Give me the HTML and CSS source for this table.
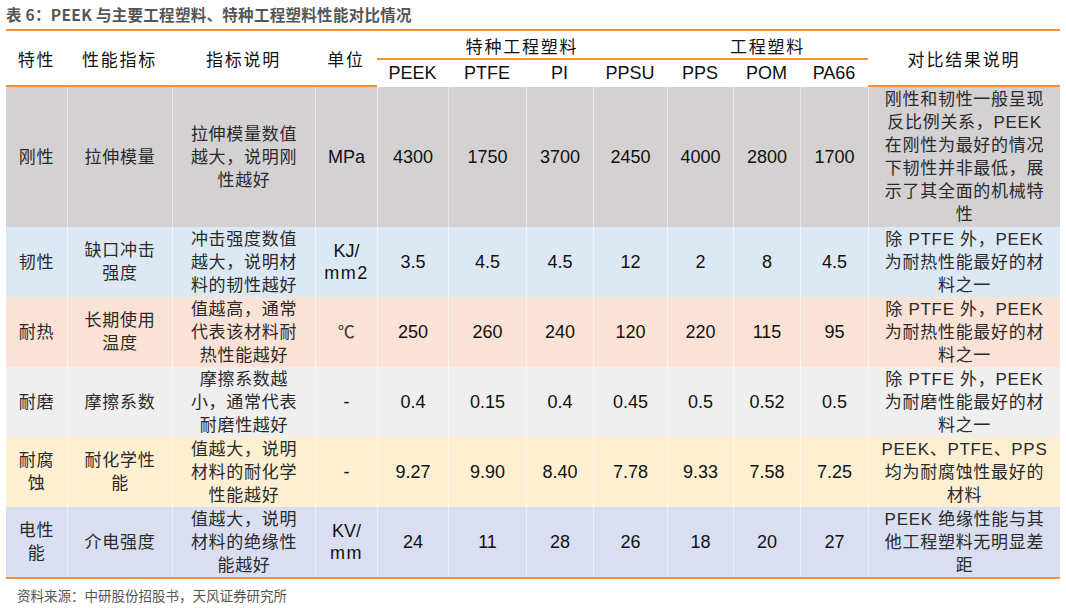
FILE: index.html
```html
<!DOCTYPE html>
<html lang="zh-CN">
<head>
<meta charset="utf-8">
<title>表 6</title>
<link rel="stylesheet" href="styles.css">
</head>
<body>
<div class="page">
  <div class="title">表 6：PEEK 与主要工程塑料、特种工程塑料性能对比情况</div>
  <div class="grid">
    <div class="h h-span c1">特性</div>
    <div class="h h-span c2">性能指标</div>
    <div class="h h-span c3">指标说明</div>
    <div class="h h-span c4">单位</div>
    <div class="h h-group g1">特种工程塑料</div>
    <div class="h h-group g2">工程塑料</div>
    <div class="h h-span c12">对比结果说明</div>
    <div class="h h-sub">PEEK</div>
    <div class="h h-sub">PTFE</div>
    <div class="h h-sub">PI</div>
    <div class="h h-sub">PPSU</div>
    <div class="h h-sub">PPS</div>
    <div class="h h-sub">POM</div>
    <div class="h h-sub">PA66</div>

    <div class="row r1">
      <div class="d first">刚性</div>
      <div class="d">拉伸模量</div>
      <div class="d">拉伸模量数值<br>越大，说明刚<br>性越好</div>
      <div class="d n">MPa</div>
      <div class="d n">4300</div>
      <div class="d n">1750</div>
      <div class="d n">3700</div>
      <div class="d n">2450</div>
      <div class="d n">4000</div>
      <div class="d n">2800</div>
      <div class="d n">1700</div>
      <div class="d">刚性和韧性一般呈现<br>反比例关系，PEEK<br>在刚性为最好的情况<br>下韧性并非最低，展<br>示了其全面的机械特<br>性</div>
    </div>

    <div class="row r2">
      <div class="d first">韧性</div>
      <div class="d">缺口冲击<br>强度</div>
      <div class="d">冲击强度数值<br>越大，说明材<br>料的韧性越好</div>
      <div class="d n"><span class="unit">KJ/<br><span class="mm">mm2</span></span></div>
      <div class="d n">3.5</div>
      <div class="d n">4.5</div>
      <div class="d n">4.5</div>
      <div class="d n">12</div>
      <div class="d n">2</div>
      <div class="d n">8</div>
      <div class="d n">4.5</div>
      <div class="d">除 PTFE 外，PEEK<br>为耐热性能最好的材<br>料之一</div>
    </div>

    <div class="row r3">
      <div class="d first">耐热</div>
      <div class="d">长期使用<br>温度</div>
      <div class="d">值越高，通常<br>代表该材料耐<br>热性能越好</div>
      <div class="d deg">℃</div>
      <div class="d n">250</div>
      <div class="d n">260</div>
      <div class="d n">240</div>
      <div class="d n">120</div>
      <div class="d n">220</div>
      <div class="d n">115</div>
      <div class="d n">95</div>
      <div class="d">除 PTFE 外，PEEK<br>为耐热性能最好的材<br>料之一</div>
    </div>

    <div class="row r4">
      <div class="d first">耐磨</div>
      <div class="d">摩擦系数</div>
      <div class="d">摩擦系数越<br>小，通常代表<br>耐磨性越好</div>
      <div class="d n">-</div>
      <div class="d n">0.4</div>
      <div class="d n">0.15</div>
      <div class="d n">0.4</div>
      <div class="d n">0.45</div>
      <div class="d n">0.5</div>
      <div class="d n">0.52</div>
      <div class="d n">0.5</div>
      <div class="d">除 PTFE 外，PEEK<br>为耐磨性能最好的材<br>料之一</div>
    </div>

    <div class="row r5">
      <div class="d first">耐腐<br>蚀</div>
      <div class="d">耐化学性<br>能</div>
      <div class="d">值越大，说明<br>材料的耐化学<br>性能越好</div>
      <div class="d n">-</div>
      <div class="d n">9.27</div>
      <div class="d n">9.90</div>
      <div class="d n">8.40</div>
      <div class="d n">7.78</div>
      <div class="d n">9.33</div>
      <div class="d n">7.58</div>
      <div class="d n">7.25</div>
      <div class="d">PEEK、PTFE、PPS<br>均为耐腐蚀性最好的<br>材料</div>
    </div>

    <div class="row r6">
      <div class="d first">电性<br>能</div>
      <div class="d">介电强度</div>
      <div class="d">值越大，说明<br>材料的绝缘性<br>能越好</div>
      <div class="d n"><span class="unit">KV/<br><span class="mm">mm</span></span></div>
      <div class="d n">24</div>
      <div class="d n">11</div>
      <div class="d n">28</div>
      <div class="d n">26</div>
      <div class="d n">18</div>
      <div class="d n">20</div>
      <div class="d n">27</div>
      <div class="d">PEEK 绝缘性能与其<br>他工程塑料无明显差<br>距</div>
    </div>
  </div>
  <div class="source">资料来源：中研股份招股书，天风证券研究所</div>
</div>
</body>
</html>
```

FILE: styles.css
```css
html, body {
  margin: 0;
  padding: 0;
  background: #ffffff;
}

body {
  font-family: "Liberation Sans", "Noto Sans CJK SC", sans-serif;
  color: #222;
}

.page {
  width: 1054px;
  margin-left: 6px;
}

.title {
  height: 29px;
  line-height: 29px;
  font-family: "Noto Sans CJK SC", "Liberation Sans", sans-serif;
  font-size: 15.5px;
  font-weight: 700;
  color: #555;
  letter-spacing: 0.3px;
  white-space: nowrap;
}

.grid {
  display: grid;
  grid-template-columns: 61px 105px 143px 62px 71px 78px 67px 74px 66px 67px 68px 192px;
  grid-template-rows: 29px 27px 140px 70px 70px 70px 70px 70px;
  border-top: 2px solid #f4923a;
  border-bottom: 2px solid #f4923a;
}

.h {
  display: flex;
  align-items: center;
  justify-content: center;
  text-align: center;
  color: #111;
  font-size: 17px;
  font-family: "Noto Sans CJK SC", "Liberation Sans", sans-serif;
  letter-spacing: 1.8px;
  background: #fff;
}

.h-span {
  grid-row: 1 / 3;
  border-bottom: 2px solid #f4923a;
}

.c1 { grid-column: 1; }
.c2 { grid-column: 2; }
.c3 { grid-column: 3; }
.c4 { grid-column: 4; }
.c12 { grid-column: 12; }

.h-group {
  grid-row: 1;
  border-bottom: 2px solid #f4923a;
  padding-top: 2px;
}

.g1 { grid-column: 5 / 9; }
.g2 { grid-column: 9 / 12; }

.h-sub {
  grid-row: 2;
  font-family: "Liberation Sans", sans-serif;
  font-size: 18px;
  letter-spacing: 0;
}

.row {
  display: contents;
}

.d {
  display: flex;
  align-items: center;
  justify-content: center;
  text-align: center;
  font-size: 17px;
  line-height: 23px;
  letter-spacing: 0.7px;
  color: #2a2a2a;
  border-left: 1px solid rgba(255, 255, 255, 0.5);
  white-space: nowrap;
}

.d.first {
  border-left: none;
}

.d.n {
  font-family: "Liberation Sans", sans-serif;
  font-size: 18px;
  letter-spacing: 0;
  color: #111;
}

.unit {
  display: block;
  line-height: 22px;
}

.mm {
  letter-spacing: 1.5px;
}

.d.deg {
  font-family: "Liberation Serif", "Noto Sans CJK SC", serif;
  font-size: 17px;
  color: #333;
}

.r1 .d { background: #d4d1d2; }
.r2 .d { background: #dde8f5; }
.r3 .d { background: #fbe2d6; }
.r4 .d { background: #efefef; }
.r5 .d { background: #fdf0d2; }
.r6 .d { background: #d9dff0; }

.source {
  padding-top: 6px;
  padding-left: 11px;
  font-family: "Noto Sans CJK SC", sans-serif;
  font-size: 13.5px;
  line-height: 20px;
  color: #555;
}
```
